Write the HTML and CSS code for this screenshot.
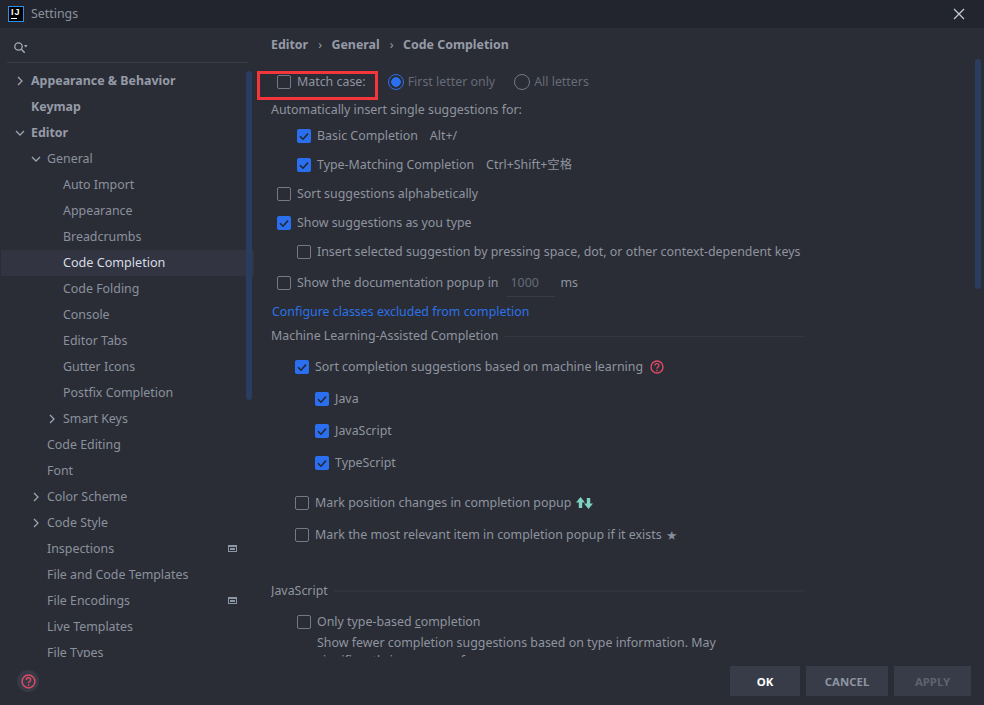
FILE: index.html
```html
<!DOCTYPE html>
<html lang="en">
<head>
<meta charset="utf-8">
<title>Settings</title>
<link rel="stylesheet" href="styles.css">
</head>
<body>
<div class="window">
  <header class="titlebar">
    <div class="app-logo"><span class="app-logo-text">IJ</span><span class="app-logo-bar"></span></div>
    <span class="title">Settings</span>
    <svg class="close" width="12" height="12" viewBox="0 0 12 12"><path d="M1 1l10 10M11 1L1 11" stroke="#c3c8d0" stroke-width="1.3" fill="none"/></svg>
  </header>
  <div class="main">
    <aside class="sidebar">
      <div class="search">
        <svg width="16" height="14" viewBox="0 0 16 14"><circle cx="5.5" cy="5.5" r="3.7" fill="none" stroke="#a5abb5" stroke-width="1.3"/><path d="M8.3 8.3l3.4 3.4" stroke="#a5abb5" stroke-width="1.5"/><path d="M11 4h3.500l-1.750 2.500z" fill="#a5abb5"/></svg>
      </div>
      <nav class="tree">
        <div class="node l0 bold"><svg class="arrow" viewBox="0 0 10 10"><path d="M3 1l4 4-4 4"/></svg>Appearance &amp; Behavior</div>
        <div class="node l0 bold"><span class="noarrow"></span>Keymap</div>
        <div class="node l0 bold"><svg class="arrow" viewBox="0 0 10 10"><path d="M1 3l4 4 4-4"/></svg>Editor</div>
        <div class="node l1"><svg class="arrow" viewBox="0 0 10 10"><path d="M1 3l4 4 4-4"/></svg>General</div>
        <div class="node l2">Auto Import</div>
        <div class="node l2">Appearance</div>
        <div class="node l2">Breadcrumbs</div>
        <div class="node l2 selected"><span class="sel-label">Code Completion</span></div>
        <div class="node l2">Code Folding</div>
        <div class="node l2">Console</div>
        <div class="node l2">Editor Tabs</div>
        <div class="node l2">Gutter Icons</div>
        <div class="node l2">Postfix Completion</div>
        <div class="node l1b"><svg class="arrow" viewBox="0 0 10 10"><path d="M3 1l4 4-4 4"/></svg>Smart Keys</div>
        <div class="node l1c">Code Editing</div>
        <div class="node l1c">Font</div>
        <div class="node l1"><svg class="arrow" viewBox="0 0 10 10"><path d="M3 1l4 4-4 4"/></svg>Color Scheme</div>
        <div class="node l1"><svg class="arrow" viewBox="0 0 10 10"><path d="M3 1l4 4-4 4"/></svg>Code Style</div>
        <div class="node l1c">Inspections<svg class="proj" viewBox="0 0 9 7"><path d="M0 0h9v7H0zM1 2v4h7V2z" fill-rule="evenodd"/><path d="M2 3h5v2H2z"/></svg></div>
        <div class="node l1c">File and Code Templates</div>
        <div class="node l1c">File Encodings<svg class="proj" viewBox="0 0 9 7"><path d="M0 0h9v7H0zM1 2v4h7V2z" fill-rule="evenodd"/><path d="M2 3h5v2H2z"/></svg></div>
        <div class="node l1c">Live Templates</div>
        <div class="node l1c">File Types</div>
      </nav>
      <div class="scrollthumb side-thumb"></div>
    </aside>
    <main class="content">
      <div class="crumbs"><b>Editor</b><span class="sep">›</span><b>General</b><span class="sep">›</span><b>Code Completion</b></div>
      <div class="panel">
        <div class="row in1 match">
          <span class="cb"></span><span>Match case:</span>
          <span class="radio on first"></span><span class="dim">First letter only</span>
          <span class="radio second"></span><span class="dim">All letters</span>
        </div>
        <div class="row m8">Automatically insert single suggestions for:</div>
        <div class="row in2 m6"><span class="cb on"><svg viewBox="0 0 14 14"><path d="M3 7.2l3 3 5-5.6"/></svg></span><span>Basic Completion</span><span class="key">Alt+/</span></div>
        <div class="row in2 m9"><span class="cb on"><svg viewBox="0 0 14 14"><path d="M3 7.2l3 3 5-5.6"/></svg></span><span>Type-Matching Completion</span><span class="key">Ctrl+Shift+空格</span></div>
        <div class="row in1 m9"><span class="cb"></span><span>Sort suggestions alphabetically</span></div>
        <div class="row in1 m9"><span class="cb on"><svg viewBox="0 0 14 14"><path d="M3 7.2l3 3 5-5.6"/></svg></span><span>Show suggestions as you type</span></div>
        <div class="row in2 m9"><span class="cb"></span><span>Insert selected suggestion by pressing space, dot, or other context-dependent keys</span></div>
        <div class="row in1 m11"><span class="cb"></span><span>Show the documentation popup in</span><span class="num">1000</span><span>ms</span></div>
        <div class="row m9 link">Configure classes excluded from completion</div>
        <div class="row m4 section"><span>Machine Learning-Assisted Completion</span><span class="rule"></span></div>
        <div class="row in3 m11"><span class="cb on"><svg viewBox="0 0 14 14"><path d="M3 7.2l3 3 5-5.6"/></svg></span><span>Sort completion suggestions based on machine learning</span><svg class="help" viewBox="0 0 14 14"><circle cx="7" cy="7" r="6" fill="none" stroke="#df4a63" stroke-width="1.4"/><path d="M5 5.500c0-2.600 4-2.600 4 0 0 1.600-2 1.600-2 3.200" fill="none" stroke="#df4a63" stroke-width="1.3"/><path d="M6.300 9.800h1.400v1.400H6.300z" fill="#df4a63"/></svg></div>
        <div class="row in4 m12"><span class="cb on"><svg viewBox="0 0 14 14"><path d="M3 7.2l3 3 5-5.6"/></svg></span><span>Java</span></div>
        <div class="row in4 m12"><span class="cb on"><svg viewBox="0 0 14 14"><path d="M3 7.2l3 3 5-5.6"/></svg></span><span>JavaScript</span></div>
        <div class="row in4 m12"><span class="cb on"><svg viewBox="0 0 14 14"><path d="M3 7.2l3 3 5-5.6"/></svg></span><span>TypeScript</span></div>
        <div class="row in3 m20"><span class="cb"></span><span>Mark position changes in completion popup</span><svg class="updown" viewBox="0 0 17 12"><path d="M4.500 0L0 5.500h2.800V11h3.400V5.500H9zM12.500 12L17 6.500h-2.800V1h-3.400v5.500H8z" fill="#7fd1c0"/></svg></div>
        <div class="row in3 m12"><span class="cb"></span><span>Mark the most relevant item in completion popup if it exists</span><span class="star">★</span></div>
        <div class="row m36 section"><span>JavaScript</span><span class="rule rule-thick"></span></div>
        <div class="row in5 m11"><span class="cb"></span><span>Only type-based <u>c</u>ompletion</span></div>
        <div class="desc">Show fewer completion suggestions based on type information. May significantly improve performance.</div>
      </div>
      <div class="scrollthumb main-thumb"></div>
    </main>
  </div>
  <footer class="footer">
    <span class="help-btn"><svg viewBox="0 0 14 14"><circle cx="7" cy="7" r="6" fill="none" stroke="#df4a63" stroke-width="1.4"/><path d="M5 5.500c0-2.600 4-2.600 4 0 0 1.600-2 1.600-2 3.200" fill="none" stroke="#df4a63" stroke-width="1.3"/><path d="M6.300 9.800h1.400v1.400H6.300z" fill="#df4a63"/></svg></span>
    <div class="buttons">
      <button class="btn ok">OK</button>
      <button class="btn cancel">CANCEL</button>
      <button class="btn apply">APPLY</button>
    </div>
  </footer>
  <div class="highlight"></div>
</div>
</body>
</html>
```
FILE: styles.css
```css
* { box-sizing: border-box; }
html, body { margin: 0; height: 100%; }
body { background: #2a2d36; color: #8f949f; font: 12.4px/20px "Noto Sans", "Noto Sans CJK SC", sans-serif; overflow: hidden; }
.window { position: relative; width: 984px; height: 705px; display: flex; flex-direction: column; overflow: hidden; }
.titlebar { height: 28px; flex: none; background: #22252d; display: flex; align-items: center; padding-left: 8px; color: #8b919d; }
.app-logo { position: relative; width: 16px; height: 16px; background: #000; border: 1px solid #2f8fe8; }
.app-logo-text { position: absolute; left: 2px; top: 1px; font: 700 9px/8px "Liberation Sans", sans-serif; color: #fff; letter-spacing: 1px; }
.app-logo-bar { position: absolute; left: 2px; bottom: 2px; width: 6px; height: 1px; background: #fff; }
.title { margin-left: 7px; }
.close { margin-left: auto; margin-right: 19px; }
.main { flex: 1; min-height: 0; display: flex; }
.sidebar { position: relative; width: 254px; flex: none; overflow: hidden; }
.search { height: 35px; margin: 0 6px 0 7px; padding: 13px 0 0 6px; border-bottom: 1px solid #383c48; display: flex; align-items: flex-start; }
.tree { margin-top: 4px; height: 590px; overflow: hidden; }
.node { position: relative; height: 26px; line-height: 24px; padding-top: 2px; display: flex; align-items: center; white-space: nowrap; color: #8a919d; }
.node.bold { font-weight: 700; color: #959ba7; }
.arrow { width: 10px; height: 10px; flex: none; fill: none; stroke: #9ea4af; stroke-width: 1.3; margin-right: 6px; }
.noarrow { width: 10px; flex: none; margin-right: 6px; }
.l0 { padding-left: 15px; }
.l1 { padding-left: 31px; }
.l1b { padding-left: 47px; }
.l1c { padding-left: 47px; }
.l2 { padding-left: 63px; }
.selected { background: #323541; color: #d8dce3; margin: 1px 0 -1px 1px; padding-left: 62px; }
.sel-label { position: relative; top: -1px; font-size: 12.6px; }
.proj { position: absolute; left: 228px; top: 10px; width: 9px; height: 7px; fill: #8c97a5; }
.scrollthumb { position: absolute; width: 6px; background: #2a3c60; border-radius: 3px; }
.side-thumb { left: 246px; top: 43px; height: 329px; }
.content { position: relative; flex: 1; min-width: 0; padding-left: 17px; }
.crumbs { height: 32px; padding-top: 7px; display: flex; align-items: flex-start; color: #959ba7; }
.crumbs .sep { margin: 0 9.5px 0 10px; }
.panel { height: 597px; overflow: hidden; padding-top: 12px; width: 534px; }
.row { min-height: 20px; display: flex; align-items: center; white-space: nowrap; }
.m4 { margin-top: 4px; } .m6 { margin-top: 6px; } .m8 { margin-top: 8px; } .m9 { margin-top: 9px; }
.m11 { margin-top: 11px; } .m12 { margin-top: 12px; } .m20 { margin-top: 20px; } .m36 { margin-top: 36px; }
.in1 { padding-left: 6px; } .in2 { padding-left: 26px; } .in3 { padding-left: 24px; } .in4 { padding-left: 44px; } .in5 { padding-left: 26px; }
.cb { width: 14px; height: 14px; flex: none; border: 1.5px solid #747985; border-radius: 2px; margin-right: 6px; }
.cb.on { background: #2a6ff0; border: 0; }
.cb svg { display: block; width: 14px; height: 14px; fill: none; stroke: #242731; stroke-width: 1.6; }
.radio { width: 16px; height: 16px; flex: none; border: 1.5px solid #747985; border-radius: 50%; margin-right: 4px; }
.radio.on { border: 1.5px solid #2a6ff0; background: radial-gradient(circle, #2a6ff0 0 4.500px, #2a2d36 5px); }
.first { margin-left: 22px; }
.second { margin-left: 19px; }
.dim { color: #666b77; }
.key { margin-left: 12px; }
.num { width: 48px; margin: -4px 6px -4px 8px; height: 28px; line-height: 27px; padding-left: 4px; color: #666b77; border-bottom: 1px solid #383c48; }
.link { color: #2c72e8; padding-left: 1px; }
.section .rule { flex: 1; height: 1px; background: #333743; margin-left: 6px; }
.section .rule-thick { height: 2px; background: #2f323c; }
.help { width: 14px; height: 14px; margin-left: 7px; }
.updown { width: 17px; height: 12px; margin-left: 5px; }
.star { margin-left: 5px; font-size: 10px; color: #8a8f9a; }
.desc { padding-left: 46px; margin-top: 2px; width: 470px; white-space: normal; line-height: 18px; }
.main-thumb { left: 721px; top: 31px; height: 230px; }
.footer { position: absolute; left: 0; right: 0; bottom: 0; height: 48px; display: flex; align-items: flex-start; justify-content: space-between; padding: 9px 13px 0 17px; }
.help-btn { width: 22px; height: 22px; margin-top: 4px; border-radius: 50%; background: #363a47; display: flex; align-items: center; justify-content: center; }
.help-btn svg { width: 15px; height: 15px; }
.buttons { display: flex; gap: 6px; }
.btn { height: 30px; border: 0; background: #383c49; font: 700 11.4px "Noto Sans", sans-serif; color: #8e95a2; padding: 0; }
.ok { width: 70px; color: #fff; }
.cancel { width: 82px; }
.apply { width: 77px; color: #5e636f; }
.highlight { position: absolute; left: 257px; top: 71px; width: 121px; height: 29px; border: 3px solid #f4353a; }
```
